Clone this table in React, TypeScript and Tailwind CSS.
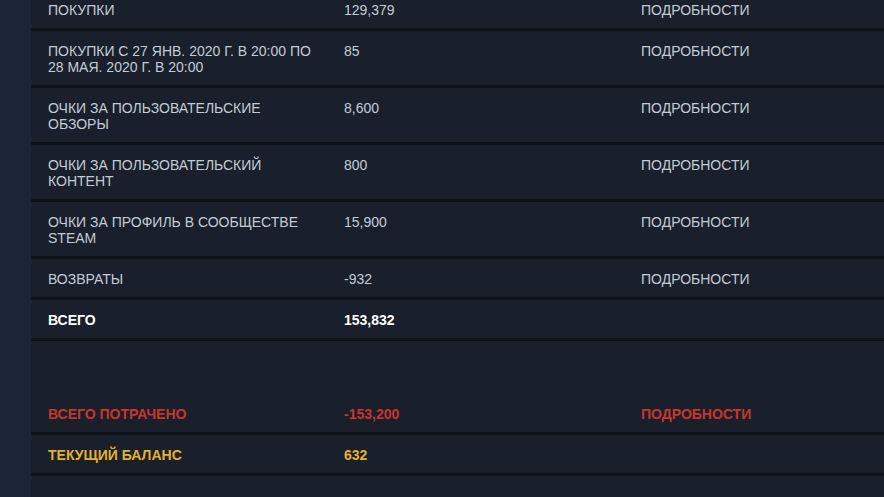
import React from "react";

type Row = {
  label: string;
  value: string;
  details?: boolean;
  tone?: "normal" | "total" | "spent" | "balance";
};

const rows: Row[] = [
  { label: "Покупки", value: "129,379", details: true },
  { label: "Покупки с 27 янв. 2020 г. в 20:00 по 28 мая. 2020 г. в 20:00", value: "85", details: true },
  { label: "Очки за пользовательские обзоры", value: "8,600", details: true },
  { label: "Очки за пользовательский контент", value: "800", details: true },
  { label: "Очки за профиль в сообществе Steam", value: "15,900", details: true },
  { label: "Возвраты", value: "-932", details: true },
  { label: "Всего", value: "153,832", tone: "total" },
];

const summary: Row[] = [
  { label: "Всего потрачено", value: "-153,200", details: true, tone: "spent" },
  { label: "Текущий баланс", value: "632", tone: "balance" },
];

const toneClass = {
  normal: "text-[#c3ccd6]",
  total: "text-white font-bold",
  spent: "text-[#c9352d] font-bold",
  balance: "text-[#e3b030] font-bold",
};

function TableRow({ row }: { row: Row }) {
  const tone = toneClass[row.tone ?? "normal"];
  return (
    <div className={`flex border-b-[3px] border-[#0e1219] pt-[12px] pb-[10px] leading-[16px] uppercase ${tone}`}>
      <div className="w-[296px] shrink-0 pl-[17px] pr-[14px]">{row.label}</div>
      <div className="w-[297px] shrink-0 pl-[17px]">{row.value}</div>
      <div className="w-[297px] shrink-0 pl-[17px]">{row.details ? "Подробности" : ""}</div>
    </div>
  );
}

export default function App() {
  return (
    <div
      className="h-[497px] w-[884px] overflow-hidden bg-[#1b2434] flex text-[14px]"
      style={{ fontFamily: '"Liberation Sans", Arial, sans-serif' }}
    >
      <div className="w-[31px] shrink-0 bg-[#1c2535]" />
      <div className="flex-1 min-w-0 bg-[#19202b]">
        <div className="-mt-[10px] w-[900px]">
          {rows.map((r) => (
            <TableRow key={r.label} row={r} />
          ))}
          <div className="h-[53px]" />
          {summary.map((r) => (
            <TableRow key={r.label} row={r} />
          ))}
        </div>
      </div>
    </div>
  );
}
